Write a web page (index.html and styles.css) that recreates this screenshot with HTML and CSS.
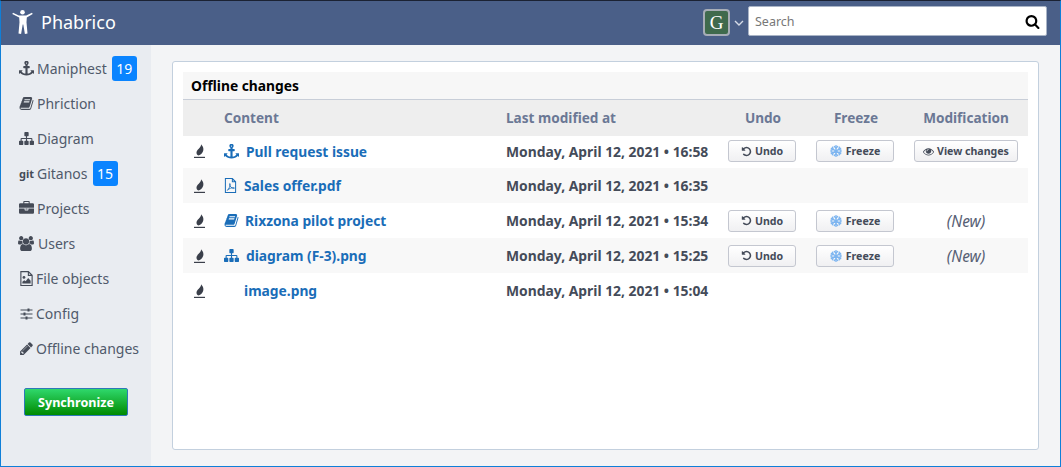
FILE: index.html
```html
<!DOCTYPE html>
<html>
  <head>
    <title>Phabrico</title>
    <meta name="viewport" content="width=device-width, initial-scale=1" />
    <link rel="stylesheet" href="styles.css">
  </head>
  <body>
    <!-- Icon sprite -->
    <svg class="sprite" xmlns="http://www.w3.org/2000/svg">
      <symbol id="i-anchor" viewBox="0 0 1792 1792"><path d="M960 256q0-26-19-45t-45-19-45 19-19 45 19 45 45 19 45-19 19-45zm832 888v352q0 22-20 30-8 2-12 2-12 0-23-9l-93-93q-119 143-318.500 226.500t-429.500 83.500-429.500-83.500-318.500-226.500l-93 93q-9 9-23 9-4 0-12-2-20-8-20-30v-352q0-14 9-23t23-9h352q22 0 30 20 8 19-7 35l-100 100q67 91 189.500 153.500t271.500 82.500v-647h-192q-26 0-45-19t-19-45v-128q0-26 19-45t45-19h192v-163q-58-34-93-92.500t-35-128.500q0-106 75-181t181-75 181 75 75 181q0 70-35 128.500t-93 92.500v163h192q26 0 45 19t19 45v128q0 26-19 45t-45 19h-192v647q149-20 271.500-82.500t189.500-153.500l-100-100q-15-16-7-35 8-20 30-20h352q14 0 23 9t9 23z"/></symbol>
      <symbol id="i-book" viewBox="0 0 1792 1792"><path d="M1703 478q40 57 18 129l-275 906q-19 64-76.500 107.500t-122.500 43.500h-923q-77 0-148.500-53.500t-99.500-131.500q-24-67-2-127 0-4 3-27t4-37q1-8-3-21.500t-3-19.500q2-11 8-21t16.500-23.500 16.500-23.500q23-38 45-91.500t30-91.500q3-10 .5-30t-.5-28q3-11 17-28t17-23q21-36 42-92t25-90q1-9-2.500-32t.5-28q4-13 22-30.500t22-22.500q19-26 42.500-84.500t27.500-96.500q1-8-3-25.500t-2-26.500q2-8 9-18t18-23 17-21q8-12 16.500-30.500t15-35 16-36 19.500-32 26.500-23.500 36-11.500 47.500 5.500l-1 3q38-9 51-9h761q74 0 114 56t18 130l-274 906q-36 119-71.500 153.500t-128.500 34.500h-869q-27 0-38 15-11 16-1 43 24 70 144 70h923q29 0 56-15.500t35-41.500l300-987q7-22 5-57 38 15 59 43zm-1064 2q-4 13 2 22.500t20 9.500h608q13 0 25.500-9.500t16.500-22.500l21-64q4-13-2-22.500t-20-9.500h-608q-13 0-25.500 9.500t-16.500 22.500zm-83 256q-4 13 2 22.500t20 9.500h608q13 0 25.500-9.500t16.500-22.500l21-64q4-13-2-22.500t-20-9.500h-608q-13 0-25.500 9.500t-16.500 22.500z"/></symbol>
      <symbol id="i-sitemap" viewBox="0 0 1792 1792"><path d="M1792 1248v320q0 40-28 68t-68 28h-320q-40 0-68-28t-28-68v-320q0-40 28-68t68-28h96v-192h-512v192h96q40 0 68 28t28 68v320q0 40-28 68t-68 28h-320q-40 0-68-28t-28-68v-320q0-40 28-68t68-28h96v-192h-512v192h96q40 0 68 28t28 68v320q0 40-28 68t-68 28h-320q-40 0-68-28t-28-68v-320q0-40 28-68t68-28h96v-192q0-52 38-90t90-38h512v-192h-96q-40 0-68-28t-28-68v-320q0-40 28-68t68-28h320q40 0 68 28t28 68v320q0 40-28 68t-68 28h-96v192h512q52 0 90 38t38 90v192h96q40 0 68 28t28 68z"/></symbol>
      <symbol id="i-briefcase" viewBox="0 0 1792 1792"><path d="M640 256h512v-128h-512v128zm1152 640v480q0 66-47 113t-113 47h-1472q-66 0-113-47t-47-113v-480h672v160q0 26 19 45t45 19h320q26 0 45-19t19-45v-160h672zm-768 0v128h-256v-128h256zm768-480v384h-1792v-384q0-66 47-113t113-47h352v-160q0-40 28-68t68-28h576q40 0 68 28t28 68v160h352q66 0 113 47t47 113z"/></symbol>
      <symbol id="i-users" viewBox="0 0 1920 1792"><path d="M593 896q-162 5-265 128h-134q-82 0-138-40.500t-56-118.500q0-353 124-353 6 0 43.500 21t97.500 42.500 119 21.500q67 0 133-23-5 37-5 66 0 139 81 256zm1071 637q0 120-73 189.500t-194 69.500h-874q-121 0-194-69.500t-73-189.500q0-53 3.500-103.500t14-109 26.500-108.500 43-97.500 62-81 85.500-53.500 111.500-20q10 0 43 21.500t73 48 107 48 135 21.500 135-21.500 107-48 73-48 43-21.500q61 0 111.500 20t85.500 53.500 62 81 43 97.500 26.500 108.500 14 109 3.500 103.500zm-1024-1277q0 106-75 181t-181 75-181-75-75-181 75-181 181-75 181 75 75 181zm704 384q0 159-112.500 271.500t-271.500 112.500-271.500-112.500-112.500-271.500 112.500-271.500 271.500-112.500 271.500 112.500 112.500 271.500zm576 225q0 78-56 118.500t-138 40.500h-134q-103-123-265-128 81-117 81-256 0-29-5-66 66 23 133 23 59 0 119-21.500t97.500-42.500 43.500-21q124 0 124 353zm-128-609q0 106-75 181t-181 75-181-75-75-181 75-181 181-75 181 75 75 181z"/></symbol>
      <symbol id="i-image" viewBox="0 0 14 16"><path d="M1 .6h8l4 4v10.800H1z M9 .6v4h4" fill="none" stroke="currentColor" stroke-width="1.200"/><circle cx="4.300" cy="6.800" r="1.500"/><path d="M2.600 13.300v-1.800l2-1.700 1.500 1 2.700-3.300 2.600 3v2.800z"/></symbol>
      <symbol id="i-pdf" viewBox="0 0 14 16"><path d="M1.500.5h7.500l3.500 3.500v11.500h-11z M9 .5v3.500h3.500" fill="none" stroke="currentColor" stroke-width="1.100"/><path d="M3.500 13.200c1.500-1 3-4 3.200-6.700 0-1-.9-.8-.7.300.4 2 2 4.200 4.500 4.400 1 0 1-.9 0-.9-2-.1-5 .9-7 2.900z" fill="none" stroke="currentColor" stroke-width=".9"/></symbol>
      <symbol id="i-sliders" viewBox="0 0 12 12"><path d="M0 1.500h12v1H0zM0 5.500h12v1H0zM0 9.500h12v1H0z"/><path d="M7 .5h2v3H7zM3 4.500h2v3H3zM5 8.500h2v3H5z"/></symbol>
      <symbol id="i-pencil" viewBox="0 0 1536 1792"><path d="M363 1536l91-91-235-235-91 91v107h128v128h107zm523-928q0-22-22-22-10 0-17 7l-542 542q-7 7-7 17 0 22 22 22 10 0 17-7l542-542q7-7 7-17zm-54-192l416 416-832 832h-416v-416zm683 96q0 53-37 90l-166 166-416-416 166-165q36-38 90-38 53 0 91 38l235 234q37 39 37 91z"/></symbol>
      <symbol id="i-search" viewBox="0 0 1792 1792"><path d="M1216 832q0-185-131.500-316.500t-316.500-131.500-316.500 131.500-131.500 316.500 131.500 316.500 316.500 131.500 316.500-131.500 131.500-316.500zm512 832q0 52-38 90t-90 38q-54 0-90-38l-343-342q-179 124-399 124-143 0-273.500-55.500t-225-150-150-225-55.500-273.500 55.500-273.500 150-225 225-150 273.500-55.500 273.500 55.500 225 150 150 225 55.500 273.500q0 220-124 399l343 343q37 37 37 90z"/></symbol>
      <symbol id="i-undo" viewBox="0 0 1792 1792"><path d="M1664 896q0 156-61 298t-164 245-245 164-298 61q-172 0-327-72.500t-264-204.500q-7-10-6.500-22.500t8.500-20.500l137-138q10-9 25-9 16 2 23 12 73 95 179 147t225 52q104 0 198.500-40.500t163.500-109.500 109.500-163.500 40.500-198.500-40.500-198.500-109.500-163.500-163.500-109.500-198.500-40.500q-98 0-188 35.500t-160 101.500l137 138q31 30 14 69-17 40-59 40h-448q-26 0-45-19t-19-45v-448q0-42 40-59 39-17 69 14l130 129q107-101 244.500-156.500t284.500-55.500q156 0 298 61t245 164 164 245 61 298z"/></symbol>
      <symbol id="i-eye" viewBox="0 0 1792 1792"><path d="M1664 960q-152-236-381-353 61 104 61 225 0 185-131.500 316.500t-316.500 131.500-316.500-131.500-131.500-316.500q0-121 61-225-229 117-381 353 133 205 333.500 326.500t434.500 121.500 434.500-121.500 333.500-326.500zm-720-384q0-20-14-34t-34-14q-125 0-214.500 89.500t-89.500 214.500q0 20 14 34t34 14 34-14 14-34q0-86 61-147t147-61q20 0 34-14t14-34zm848 384q0 34-20 69-140 230-376.500 368.500t-499.500 138.500-499.500-139-376.500-368q-20-35-20-69t20-69q140-229 376.500-368t499.500-139 499.500 139 376.500 368q20 35 20 69z"/></symbol>
      <symbol id="i-snow" viewBox="0 0 16 16"><g fill="none" stroke="currentColor" stroke-width="1.800" stroke-linecap="round"><path d="M8 .8v14.400M1.800 4.400l12.400 7.200M14.200 4.400l-12.400 7.200"/><path d="M5.800 2L8 4l2.200-2M5.800 14L8 12l2.200 2M1.300 7l2.900-1-.7-3M14.700 7l-2.900-1 .7-3M1.300 9l2.900 1-.7 3M14.700 9l-2.900 1 .7 3"/></g></symbol>
      <symbol id="i-flame" viewBox="0 0 11 14"><path d="M7.200 0c.2 1 .9 1.500 1.500 2.600.7 1.300.9 2.800.5 4.200-.5 1.900-1.700 3.500-3.500 4.300-.9.400-1.700.4-2.200-.1C2.400 9.900 2.300 8.700 2.700 7.500 3.200 6 4.600 5 5.600 3.800 6.500 2.700 7.200 1.500 7.200 0z"/><path d="M0 12.800h11V14H0z"/></symbol>
      <symbol id="i-person" viewBox="0 0 21 24"><circle cx="10.500" cy="2.300" r="2.300"/><path d="M.3 3.900L1 2.800l5.800 2.700h7.400L20 2.800l.7 1.100-5.900 3.700-.3 4.700 1 11.300-2.600.3-1.600-9.500h-.6l-1.600 9.500-2.600-.3 1-11.300-.3-4.700z"/></symbol>
    </svg>

    <div class="window">
      <header class="topbar">
        <div class="brand">
          <svg class="brand-icon"><use href="#i-person"/></svg>
          <span>Phabrico</span>
        </div>
        <div class="account">
          <div class="avatar">G</div>
          <svg class="chevron" viewBox="0 0 10 6"><path d="M1 1l4 4 4-4" fill="none" stroke="currentColor" stroke-width="1.400"/></svg>
        </div>
        <div class="search">
          <span>Search</span>
          <svg class="search-icon"><use href="#i-search"/></svg>
        </div>
      </header>

      <div class="main">
        <nav class="sidebar">
          <a class="nav-item"><svg class="nav-icon"><use href="#i-anchor"/></svg>Maniphest<span class="badge">19</span></a>
          <a class="nav-item"><svg class="nav-icon"><use href="#i-book"/></svg>Phriction</a>
          <a class="nav-item"><svg class="nav-icon"><use href="#i-sitemap"/></svg>Diagram</a>
          <a class="nav-item"><span class="nav-git">git</span>Gitanos<span class="badge">15</span></a>
          <a class="nav-item"><svg class="nav-icon"><use href="#i-briefcase"/></svg>Projects</a>
          <a class="nav-item"><svg class="nav-icon nav-icon-wide"><use href="#i-users"/></svg>Users</a>
          <a class="nav-item"><svg class="nav-icon nav-icon-narrow"><use href="#i-image"/></svg>File objects</a>
          <a class="nav-item"><svg class="nav-icon nav-icon-narrow nav-icon-sliders"><use href="#i-sliders"/></svg>Config</a>
          <a class="nav-item"><svg class="nav-icon nav-icon-narrow"><use href="#i-pencil"/></svg>Offline changes</a>
          <button class="sync">Synchronize</button>
        </nav>

        <main class="content">
          <section class="card">
            <h1 class="card-title">Offline changes</h1>
            <table class="changes">
              <colgroup>
                <col class="col-state"><col class="col-content"><col class="col-date"><col class="col-undo"><col class="col-freeze"><col class="col-mod">
              </colgroup>
              <thead>
                <tr>
                  <th></th>
                  <th class="left">Content</th>
                  <th class="left">Last modified at</th>
                  <th>Undo</th>
                  <th>Freeze</th>
                  <th>Modification</th>
                </tr>
              </thead>
              <tbody>
                <tr>
                  <td><svg class="flame"><use href="#i-flame"/></svg></td>
                  <td><a class="item"><svg class="item-icon"><use href="#i-anchor"/></svg>Pull request issue</a></td>
                  <td class="date">Monday, April 12, 2021 • 16:58</td>
                  <td class="center"><button class="btn"><svg class="btn-icon"><use href="#i-undo"/></svg>Undo</button></td>
                  <td class="center"><button class="btn btn-freeze"><svg class="btn-icon snow"><use href="#i-snow"/></svg>Freeze</button></td>
                  <td class="center"><button class="btn btn-view"><svg class="btn-icon"><use href="#i-eye"/></svg>View changes</button></td>
                </tr>
                <tr>
                  <td><svg class="flame"><use href="#i-flame"/></svg></td>
                  <td><a class="item"><svg class="item-icon item-icon-narrow"><use href="#i-pdf"/></svg>Sales offer.pdf</a></td>
                  <td class="date">Monday, April 12, 2021 • 16:35</td>
                  <td></td><td></td><td></td>
                </tr>
                <tr>
                  <td><svg class="flame"><use href="#i-flame"/></svg></td>
                  <td><a class="item"><svg class="item-icon item-icon-book"><use href="#i-book"/></svg>Rixzona pilot project</a></td>
                  <td class="date">Monday, April 12, 2021 • 15:34</td>
                  <td class="center"><button class="btn"><svg class="btn-icon"><use href="#i-undo"/></svg>Undo</button></td>
                  <td class="center"><button class="btn btn-freeze"><svg class="btn-icon snow"><use href="#i-snow"/></svg>Freeze</button></td>
                  <td class="center new">(New)</td>
                </tr>
                <tr>
                  <td><svg class="flame"><use href="#i-flame"/></svg></td>
                  <td><a class="item"><svg class="item-icon"><use href="#i-sitemap"/></svg>diagram (F-3).png</a></td>
                  <td class="date">Monday, April 12, 2021 • 15:25</td>
                  <td class="center"><button class="btn"><svg class="btn-icon"><use href="#i-undo"/></svg>Undo</button></td>
                  <td class="center"><button class="btn btn-freeze"><svg class="btn-icon snow"><use href="#i-snow"/></svg>Freeze</button></td>
                  <td class="center new">(New)</td>
                </tr>
                <tr>
                  <td><svg class="flame"><use href="#i-flame"/></svg></td>
                  <td><a class="item item-plain">image.png</a></td>
                  <td class="date">Monday, April 12, 2021 • 15:04</td>
                  <td></td><td></td><td></td>
                </tr>
              </tbody>
            </table>
          </section>
        </main>
      </div>
    </div>
  </body>
</html>
```

FILE: styles.css
```css
* {
  box-sizing: border-box;
}

html,
body {
  height: 100%;
  margin: 0;
}

body {
  font-family: "Noto Sans", sans-serif;
  font-size: 14px;
}

.sprite {
  display: none;
}

svg {
  fill: currentColor;
}

/* Window frame */
.window {
  display: flex;
  flex-direction: column;
  height: 467px;
  border: 1px solid #0f7fd8;
  border-top-color: #1b2233;
}

/* Top bar */
.topbar {
  display: flex;
  align-items: center;
  flex: 0 0 44px;
  background-color: #4a5f88;
  color: #fff;
  padding: 0 13px 2px 0;
}

.brand {
  display: flex;
  align-items: center;
  flex: 1;
  padding-left: 11px;
  font-size: 18px;
}

.brand-icon {
  width: 21px;
  height: 24px;
  margin-top: -1px;
  margin-right: 8px;
}

.account {
  display: flex;
  align-items: center;
  margin: 1px 4px 0 0;
}

.avatar {
  width: 27px;
  height: 27px;
  border: 2px solid #a7adb7;
  border-radius: 4px;
  background-color: #3f6a4d;
  color: #fff;
  font-family: "Liberation Serif", serif;
  font-size: 19px;
  line-height: 23px;
  text-align: center;
}

.chevron {
  width: 10px;
  height: 6px;
  margin-left: 4px;
  color: #d5dbe6;
}

.search {
  display: flex;
  align-items: center;
  justify-content: space-between;
  width: 299px;
  height: 30px;
  margin-bottom: 2px;
  padding: 0 6px;
  background-color: #fff;
  border: 1px solid #a9b4c6;
  border-radius: 2px;
  color: #777;
  font-size: 12.5px;
}

.search-icon {
  width: 15px;
  height: 15px;
  color: #000;
}

/* Sidebar */
.main {
  display: flex;
  flex: 1;
  min-height: 0;
}

.sidebar {
  display: flex;
  flex-direction: column;
  flex: 0 0 150px;
  background-color: #e9ecf1;
  padding-top: 6px;
  color: #505a6b;
}

.nav-item {
  display: flex;
  align-items: center;
  height: 35px;
  padding-left: 18px;
  white-space: nowrap;
}

.nav-icon {
  width: 15px;
  height: 15px;
  margin-right: 3px;
  flex: none;
  color: #454b57;
}

.nav-icon-wide {
  width: 16px;
  margin-left: -1px;
  margin-right: 4px;
}

.nav-icon-narrow {
  margin-right: 2px;
}

.nav-icon-sliders {
  width: 13px;
  height: 12px;
  margin-left: 1px;
  margin-right: 3px;
}

.nav-git {
  width: 15px;
  margin-right: 3px;
  font-size: 11px;
  font-weight: 700;
  color: #454b57;
  flex: none;
}

.badge {
  margin-left: 5px;
  width: 25px;
  height: 25px;
  border-radius: 3px;
  background-color: #0a84ff;
  color: #fff;
  line-height: 25px;
  text-align: center;
}

.sync {
  align-self: flex-start;
  width: 104px;
  height: 28px;
  margin: 22px 0 0 23px;
  padding: 0;
  border: 1px solid #2e78b8;
  border-radius: 2px;
  background: linear-gradient(#2fd86c, #008a00);
  color: #fff;
  font-family: inherit;
  font-size: 12.6px;
  font-weight: 700;
}

/* Content card */
.content {
  flex: 1;
  padding: 16px 21px 16px 21px;
  background-color: #f3f4f6;
}

.card {
  height: 389px;
  padding: 10px 10px;
  background-color: #fff;
  border: 1px solid #c3d0de;
  border-radius: 3px;
}

.card-title {
  margin: 0;
  height: 28px;
  padding-left: 8px;
  background-color: #f7f7f7;
  border-bottom: 1px solid #c8ced8;
  color: #000;
  font-size: 13.8px;
  font-weight: 700;
  line-height: 27px;
}

/* Changes table */
.changes {
  width: 845px;
  table-layout: fixed;
  border-collapse: collapse;
}

.col-state { width: 31px; }
.col-content { width: 282px; }
.col-date { width: 222px; }
.col-undo { width: 90px; }
.col-freeze { width: 96px; }
.col-mod { width: 124px; }

.changes th {
  height: 36px;
  padding: 0 0 2px;
  background-color: #eeeeee;
  color: #6b7895;
  font-size: 13.6px;
  font-weight: 700;
}

.changes th.left {
  padding-left: 10px;
  text-align: left;
}

.changes td {
  height: 35px;
  padding: 0;
}

.changes tbody tr:first-child td {
  height: 32px;
  padding-bottom: 2px;
}

.changes tbody tr:nth-child(even) td {
  background-color: #f8f8f8;
}

.flame {
  display: block;
  width: 11px;
  height: 14px;
  margin-left: 11px;
  color: #3a3f4a;
}

.item {
  display: flex;
  align-items: center;
  padding-left: 10px;
  color: #1a6db8;
  font-size: 13.8px;
  font-weight: 700;
}

.item-icon {
  width: 15px;
  height: 15px;
  margin-right: 7px;
  flex: none;
}

.item-icon-narrow {
  width: 13px;
  margin-right: 7px;
}

.item-icon-book {
  margin-right: 6px;
}

.item-plain {
  padding-left: 30px;
}

.changes td.date {
  padding-left: 10px;
  color: #444b59;
  font-size: 13.86px;
  font-weight: 700;
}

.center {
  text-align: center;
}

.new {
  color: #566074;
  font-size: 15.5px;
  font-style: italic;
}

.btn {
  display: inline-flex;
  align-items: center;
  justify-content: center;
  width: 68px;
  height: 22px;
  margin-right: 2px;
  padding: 0;
  border: 1px solid #c4c7d0;
  border-radius: 3px;
  background: linear-gradient(#fff, #f0f0f2);
  color: #444b59;
  font-family: inherit;
  font-size: 10.6px;
  font-weight: 700;
}

.btn-freeze {
  width: 78px;
}

.btn-view {
  width: 104px;
  margin-right: 0;
}

.btn-icon {
  width: 11px;
  height: 11px;
  margin-right: 3px;
}

.snow {
  width: 12px;
  height: 12px;
  margin-right: 4px;
  color: #7db5f0;
}
```
